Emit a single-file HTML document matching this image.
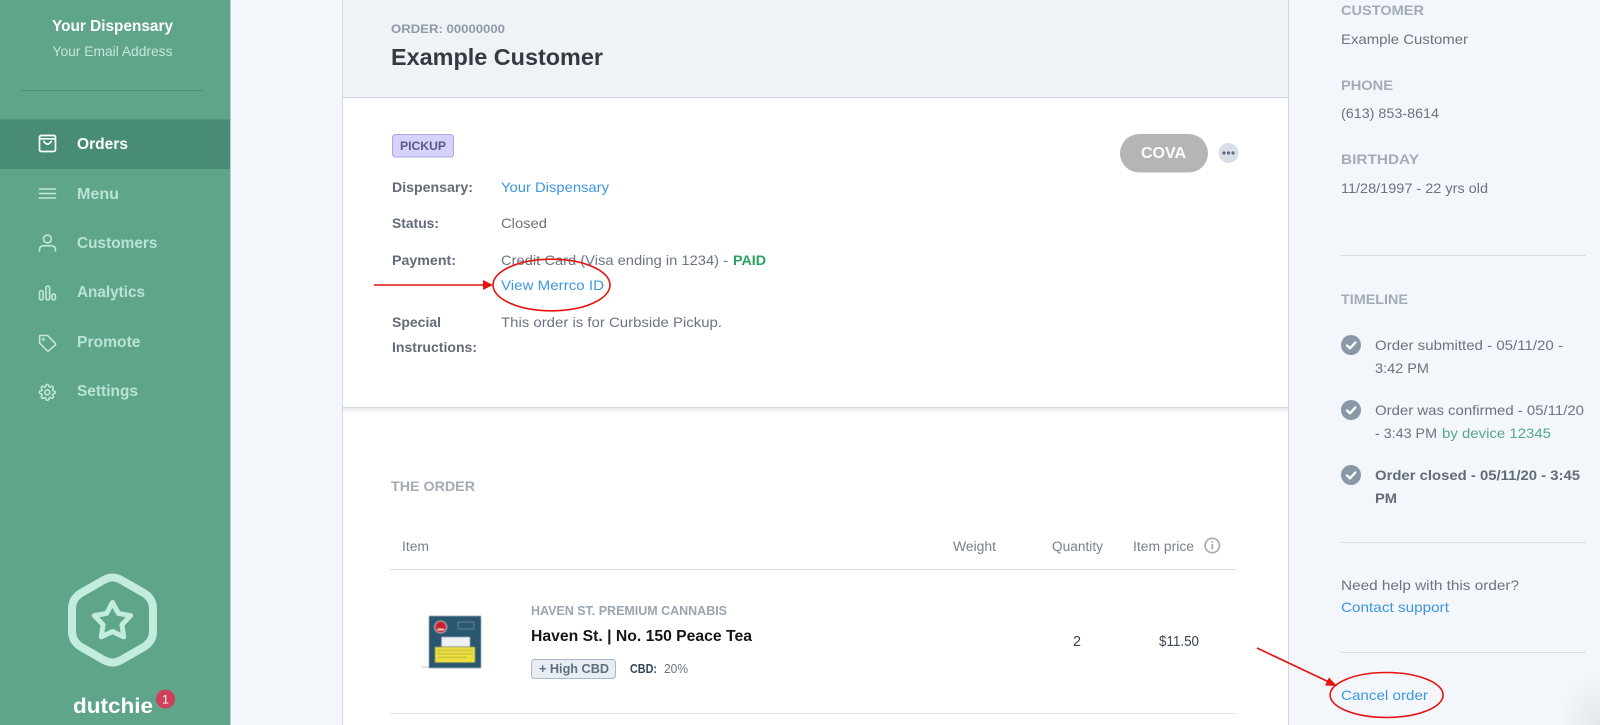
<!DOCTYPE html>
<html lang="en">
<head>
<meta charset="utf-8">
<title>Order - Example Customer</title>
<style>
html,body{margin:0;padding:0;width:1600px;height:725px;overflow:hidden;background:#f3f6fa}
svg{display:block;font-family:"Liberation Sans",sans-serif;filter:blur(.35px)}
.b{font-weight:700}
.t{font-size:14px;fill:#6b7480}
.l{font-size:14px;fill:#3d97e0}
.k{font-size:14px;font-weight:700;fill:#626b76}
.h{font-size:14px;font-weight:700;fill:#a3acb6}
.n{font-size:15.5px;font-weight:700;fill:#b9e3d3}
.i{fill:none;stroke:#c4e8da;stroke-width:1.6;stroke-linecap:round;stroke-linejoin:round}
</style>
</head>
<body>
<svg xmlns="http://www.w3.org/2000/svg" width="1600" height="725" viewBox="0 0 1600 725">
<defs>
<linearGradient id="sh" x1="0" y1="0" x2="0" y2="1"><stop offset="0" stop-color="#e6e9ee"/><stop offset="1" stop-color="#ffffff"/></linearGradient>
<radialGradient id="cr" cx="1" cy="1" r="1"><stop offset="0" stop-color="#e4e7ea"/><stop offset="1" stop-color="#f3f6fa"/></radialGradient>
</defs>

<rect width="1600" height="725" fill="#f3f6fa"/>

<!-- Sidebar -->
<rect width="230" height="725" fill="#5fa58a"/>
<rect x="230" width="1" height="725" fill="#b5d3c8"/>
<text x="52" y="31" class="b" font-size="16" fill="#fff" textLength="121" lengthAdjust="spacingAndGlyphs">Your Dispensary</text>
<text x="52.5" y="56" font-size="14" fill="#c5e5d8" textLength="120" lengthAdjust="spacingAndGlyphs">Your Email Address</text>
<rect x="21" y="90" width="182" height="1" fill="#4b9279"/>
<rect y="119.5" width="230" height="49.5" fill="#478c73"/>

<text x="77" y="149" class="n" style="fill:#fff" textLength="51" lengthAdjust="spacingAndGlyphs">Orders</text>
<text x="77" y="199" class="n" textLength="42" lengthAdjust="spacingAndGlyphs">Menu</text>
<text x="77" y="248" class="n" textLength="80.5" lengthAdjust="spacingAndGlyphs">Customers</text>
<text x="77" y="297" class="n" textLength="68" lengthAdjust="spacingAndGlyphs">Analytics</text>
<text x="77" y="347" class="n" textLength="63.5" lengthAdjust="spacingAndGlyphs">Promote</text>
<text x="77" y="396" class="n" textLength="61" lengthAdjust="spacingAndGlyphs">Settings</text>

<!-- Bag -->
<g fill="none" stroke="#fff" stroke-width="1.7" stroke-linecap="round" stroke-linejoin="round">
<path d="M41.5 135.5H53.5Q55.5 135.5 55.5 137.5V149.5Q55.5 151.5 53.5 151.5H41.5Q39.5 151.5 39.5 149.5V137.5Q39.5 135.5 41.5 135.5Z"/>
<path d="M39.8 138.8H55.2"/>
<path d="M43.8 141.5Q47.5 146.8 51.2 141.5"/>
</g>
<!-- Menu -->
<path class="i" d="M39.5 189H55.5M39.5 193.5H55.5M39.5 198H55.5"/>
<!-- User -->
<g class="i"><circle cx="47.4" cy="239" r="3.9"/><path d="M39.5 251V249.5Q39.5 245.8 44 245.8H51Q55.5 245.8 55.5 249.5V251"/></g>
<!-- Analytics -->
<g class="i"><rect x="39.5" y="290.5" width="3.6" height="9.5" rx="1.8"/><rect x="46" y="286" width="3.6" height="14" rx="1.8"/><rect x="52" y="294" width="3.4" height="6" rx="1.7"/></g>
<!-- Tag -->
<g class="i"><path d="M40.5 335.5H47.5L55.3 343.4Q56 344.3 55.2 345.2L48.6 350.8Q47.8 351.4 47.1 350.7L39.6 343V336.4Q39.6 335.5 40.5 335.5Z"/><circle cx="43.4" cy="339.4" r=".6"/></g>
<!-- Gear -->
<g class="i"><circle cx="47.3" cy="392.3" r="2.5"/><path transform="translate(38.6 383.6) scale(.725)" stroke-width="2.1" d="M19.4 15a1.65 1.65 0 0 0 .33 1.82l.06.06a2 2 0 0 1 0 2.83 2 2 0 0 1-2.83 0l-.06-.06a1.65 1.65 0 0 0-1.82-.33 1.65 1.65 0 0 0-1 1.51V21a2 2 0 0 1-2 2 2 2 0 0 1-2-2v-.09A1.65 1.65 0 0 0 9 19.4a1.65 1.65 0 0 0-1.82.33l-.06.06a2 2 0 0 1-2.83 0 2 2 0 0 1 0-2.83l.06-.06a1.65 1.65 0 0 0 .33-1.82 1.65 1.65 0 0 0-1.51-1H3a2 2 0 0 1-2-2 2 2 0 0 1 2-2h.09A1.65 1.65 0 0 0 4.6 9a1.65 1.65 0 0 0-.33-1.82l-.06-.06a2 2 0 0 1 0-2.83 2 2 0 0 1 2.83 0l.06.06a1.65 1.65 0 0 0 1.82.33H9a1.65 1.65 0 0 0 1-1.51V3a2 2 0 0 1 2-2 2 2 0 0 1 2 2v.09a1.65 1.65 0 0 0 1 1.51 1.65 1.65 0 0 0 1.82-.33l.06-.06a2 2 0 0 1 2.83 0 2 2 0 0 1 0 2.83l-.06.06a1.65 1.65 0 0 0-.33 1.82V9a1.65 1.65 0 0 0 1.51 1H21a2 2 0 0 1 2 2 2 2 0 0 1-2 2h-.09a1.65 1.65 0 0 0-1.51 1z"/></g>

<!-- Logo -->
<path d="M103 580.5Q112.5 574.5 122 580.5L143 592.5Q153 598 153 609V631Q153 642 143 647.5L122 659.5Q112.5 665.5 103 659.5L82 647.5Q72 642 72 631V609Q72 598 82 592.5Z" fill="none" stroke="#c2ecdc" stroke-width="8"/>
<path d="M112.5 602.5L118.4 613.4L130.6 615.6L122 624.6L123.7 636.9L112.5 631.5L101.3 636.9L103 624.6L94.4 615.6L106.6 613.4Z" fill="none" stroke="#c2ecdc" stroke-width="5" stroke-linejoin="round"/>
<text x="73" y="713" class="b" font-size="21" fill="#fff" textLength="80" lengthAdjust="spacingAndGlyphs">dutchie</text>
<circle cx="165.5" cy="699" r="9.5" fill="#d04058"/>
<text x="165.5" y="703.5" font-size="12" fill="#fff" text-anchor="middle">1</text>

<!-- Main panel -->
<rect x="342" width="946" height="725" fill="#fff"/>
<rect x="342" width="946" height="97" fill="#eff3f6"/>
<rect x="342" y="97" width="946" height="1" fill="#cfd8e0"/>
<rect x="342" width="1" height="725" fill="#d3d9e4"/>
<rect x="1288" width="1" height="725" fill="#cdd5e2"/>
<text x="391" y="33" class="b" font-size="12" fill="#8f99a5" textLength="114" lengthAdjust="spacingAndGlyphs">ORDER: 00000000</text>
<text x="391" y="65" class="b" font-size="23" fill="#333a42" textLength="212" lengthAdjust="spacingAndGlyphs">Example Customer</text>

<!-- Order details -->
<rect x="392.5" y="134.5" width="61" height="22.5" rx="3" fill="#d5d3fb" stroke="#a9a6e0"/>
<text x="400" y="150" class="b" font-size="12" fill="#5a5985" textLength="46" lengthAdjust="spacingAndGlyphs">PICKUP</text>
<text x="392" y="192" class="k" textLength="81" lengthAdjust="spacingAndGlyphs">Dispensary:</text>
<text x="501" y="192" class="l" textLength="108" lengthAdjust="spacingAndGlyphs">Your Dispensary</text>
<text x="392" y="228" class="k" textLength="47" lengthAdjust="spacingAndGlyphs">Status:</text>
<text x="501" y="228" class="t" textLength="46" lengthAdjust="spacingAndGlyphs">Closed</text>
<text x="392" y="265" class="k" textLength="64" lengthAdjust="spacingAndGlyphs">Payment:</text>
<text x="501" y="265" class="t" textLength="227" lengthAdjust="spacingAndGlyphs">Credit Card (Visa ending in 1234) -</text>
<text x="733" y="265" class="b" font-size="14" fill="#27a35f" textLength="33" lengthAdjust="spacingAndGlyphs">PAID</text>
<text x="501" y="290" class="l" textLength="103" lengthAdjust="spacingAndGlyphs">View Merrco ID</text>
<text x="392" y="327" class="k" textLength="49" lengthAdjust="spacingAndGlyphs">Special</text>
<text x="392" y="352" class="k" textLength="85" lengthAdjust="spacingAndGlyphs">Instructions:</text>
<text x="501" y="327" class="t" textLength="221" lengthAdjust="spacingAndGlyphs">This order is for Curbside Pickup.</text>

<!-- COVA -->
<rect x="1120" y="134" width="88" height="38.5" rx="19.25" fill="#b5b5b5"/>
<text x="1141" y="158" class="b" font-size="16" fill="#fff" textLength="45" lengthAdjust="spacingAndGlyphs">COVA</text>
<circle cx="1228.5" cy="153" r="10" fill="#d9dee9"/>
<g fill="#5f6b7c"><circle cx="1224" cy="153" r="1.6"/><circle cx="1228.5" cy="153" r="1.6"/><circle cx="1233" cy="153" r="1.6"/></g>

<!-- Divider -->
<rect x="343" y="407" width="945" height="1" fill="#d5dbe3"/>
<rect x="343" y="408" width="945" height="5" fill="url(#sh)"/>

<!-- Table -->
<text x="391" y="491" class="h" textLength="84" lengthAdjust="spacingAndGlyphs">THE ORDER</text>
<g font-size="13.5" fill="#78818c">
<text x="402" y="551" textLength="27" lengthAdjust="spacingAndGlyphs">Item</text>
<text x="953" y="551" textLength="43" lengthAdjust="spacingAndGlyphs">Weight</text>
<text x="1052" y="551" textLength="51" lengthAdjust="spacingAndGlyphs">Quantity</text>
<text x="1133" y="551" textLength="61" lengthAdjust="spacingAndGlyphs">Item price</text>
</g>
<circle cx="1212.3" cy="545.5" r="7.2" fill="none" stroke="#a9a9a9" stroke-width="1.6"/>
<rect x="1211.4" y="544" width="1.8" height="5.5" fill="#a9a9a9"/>
<rect x="1211.4" y="541" width="1.8" height="1.8" fill="#a9a9a9"/>
<rect x="390" y="569" width="846" height="1" fill="#d6dee3"/>

<!-- Product -->
<g style="filter:blur(.5px)">
<rect x="421" y="666.5" width="12" height="1.4" fill="#d6d9db"/>
<rect x="429" y="616" width="52" height="52" fill="#2b5670"/>
<circle cx="440.7" cy="627" r="6" fill="#c9222e" stroke="#e8eef0" stroke-width=".8"/>
<path d="M437.5 629.5H444" stroke="#fff" stroke-width="1.6"/>
<rect x="458" y="622" width="16" height="7" fill="none" stroke="#7c9bb0" stroke-width=".7"/>
<rect x="441.5" y="637" width="28.5" height="9.5" fill="#eef1f3"/>
<rect x="435" y="647" width="40" height="15.5" fill="#ecdf3e"/>
<g fill="#a8a24a"><rect x="437" y="650" width="36" height=".7"/><rect x="437" y="653.5" width="36" height=".7"/><rect x="437" y="657" width="30" height=".7"/></g>
</g>

<text x="531" y="615" class="b" font-size="12.5" fill="#9aa5b1" textLength="196" lengthAdjust="spacingAndGlyphs">HAVEN ST. PREMIUM CANNABIS</text>
<text x="531" y="641" class="b" font-size="16" fill="#14171a" textLength="221" lengthAdjust="spacingAndGlyphs">Haven St. | No. 150 Peace Tea</text>
<rect x="531.5" y="659.5" width="84" height="19" rx="3" fill="#e8edf3" stroke="#a9b7c6"/>
<text x="539" y="673" class="b" font-size="13" fill="#5d6e80" textLength="70" lengthAdjust="spacingAndGlyphs">+ High CBD</text>
<text x="630" y="673" class="b" font-size="13" fill="#34465a" textLength="27" lengthAdjust="spacingAndGlyphs">CBD:</text>
<text x="664" y="673" font-size="13" fill="#6b7480" textLength="24" lengthAdjust="spacingAndGlyphs">20%</text>
<text x="1073" y="646" font-size="15" fill="#3a4654" textLength="8" lengthAdjust="spacingAndGlyphs">2</text>
<text x="1159" y="646" font-size="15" fill="#3a4654" textLength="40" lengthAdjust="spacingAndGlyphs">$11.50</text>
<rect x="390" y="713" width="846" height="1" fill="#dfe3e8"/>

<!-- Right column -->
<text x="1341" y="15" class="h" textLength="83" lengthAdjust="spacingAndGlyphs">CUSTOMER</text>
<text x="1341" y="44" class="t" textLength="127" lengthAdjust="spacingAndGlyphs">Example Customer</text>
<text x="1341" y="90" class="h" textLength="52" lengthAdjust="spacingAndGlyphs">PHONE</text>
<text x="1341" y="118" class="t" textLength="98" lengthAdjust="spacingAndGlyphs">(613) 853-8614</text>
<text x="1341" y="164" class="h" textLength="78" lengthAdjust="spacingAndGlyphs">BIRTHDAY</text>
<text x="1341" y="193" class="t" textLength="147" lengthAdjust="spacingAndGlyphs">11/28/1997 - 22 yrs old</text>
<rect x="1341" y="255" width="245" height="1" fill="#d6dde3"/>
<text x="1341" y="304" class="h" textLength="67" lengthAdjust="spacingAndGlyphs">TIMELINE</text>

<g fill="#8a97a7"><circle cx="1351" cy="345" r="10"/><circle cx="1351" cy="410" r="10"/><circle cx="1351" cy="475" r="10"/></g>
<g fill="none" stroke="#fff" stroke-width="2.4" stroke-linecap="round" stroke-linejoin="round">
<path d="M1347 345.5L1350 348.3L1355.3 342.5"/><path d="M1347 410.5L1350 413.3L1355.3 407.5"/><path d="M1347 475.5L1350 478.3L1355.3 472.5"/>
</g>
<text x="1375" y="350" class="t" textLength="188" lengthAdjust="spacingAndGlyphs">Order submitted - 05/11/20 -</text>
<text x="1375" y="373" class="t" textLength="54" lengthAdjust="spacingAndGlyphs">3:42 PM</text>
<text x="1375" y="415" class="t" textLength="209" lengthAdjust="spacingAndGlyphs">Order was confirmed - 05/11/20</text>
<text x="1375" y="438" class="t" textLength="62" lengthAdjust="spacingAndGlyphs">- 3:43 PM</text>
<text x="1442" y="438" font-size="14" fill="#56a88a" textLength="109" lengthAdjust="spacingAndGlyphs">by device 12345</text>
<text x="1375" y="480" class="k" textLength="205" lengthAdjust="spacingAndGlyphs">Order closed - 05/11/20 - 3:45</text>
<text x="1375" y="503" class="k" textLength="22" lengthAdjust="spacingAndGlyphs">PM</text>

<rect x="1341" y="542" width="245" height="1" fill="#d6dde3"/>
<text x="1341" y="590" class="t" textLength="178" lengthAdjust="spacingAndGlyphs">Need help with this order?</text>
<text x="1341" y="612" class="l" textLength="108" lengthAdjust="spacingAndGlyphs">Contact support</text>
<rect x="1341" y="652" width="245" height="1" fill="#d6dde3"/>
<text x="1341" y="700" class="l" textLength="87" lengthAdjust="spacingAndGlyphs">Cancel order</text>
<rect x="1560" y="670" width="40" height="55" fill="url(#cr)"/>

<!-- Annotations -->
<g fill="none" stroke="#e5140f" stroke-width="1.6">
<ellipse cx="551.5" cy="285" rx="58.5" ry="25.8"/>
<path d="M374 285H486"/>
<ellipse cx="1386.6" cy="695" rx="56.5" ry="22.5"/>
<path d="M1257 648L1330 682.5"/>
</g>
<path d="M483 280L493 285L483 290Z" fill="#e5140f"/>
<path d="M1337 686L1325 685.5L1329 677.5Z" fill="#e5140f"/>
</svg>
</body>
</html>
